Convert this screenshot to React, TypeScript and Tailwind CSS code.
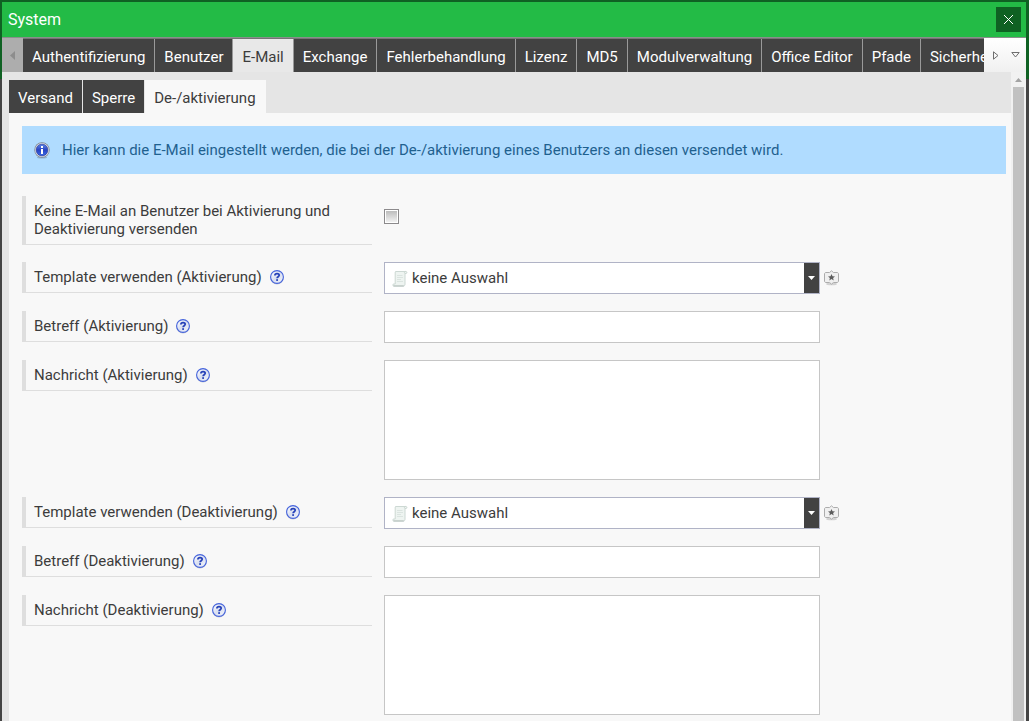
import * as React from 'react';
import { clsx } from 'clsx';

const mainTabs = [
  'Authentifizierung',
  'Benutzer',
  'E-Mail',
  'Exchange',
  'Fehlerbehandlung',
  'Lizenz',
  'MD5',
  'Modulverwaltung',
  'Office Editor',
  'Pfade',
  'Sicherheit',
];

const subTabs = ['Versand', 'Sperre', 'De-/aktivierung'];

type FieldKind = 'checkbox' | 'select' | 'text' | 'textarea';

interface Field {
  id: string;
  label: string;
  kind: FieldKind;
}

const fields: Field[] = [
  {
    id: 'no-mail',
    label: 'Keine E-Mail an Benutzer bei Aktivierung und Deaktivierung versenden',
    kind: 'checkbox',
  },
  { id: 'tpl-on', label: 'Template verwenden (Aktivierung)', kind: 'select' },
  { id: 'subject-on', label: 'Betreff (Aktivierung)', kind: 'text' },
  { id: 'message-on', label: 'Nachricht (Aktivierung)', kind: 'textarea' },
  { id: 'tpl-off', label: 'Template verwenden (Deaktivierung)', kind: 'select' },
  { id: 'subject-off', label: 'Betreff (Deaktivierung)', kind: 'text' },
  { id: 'message-off', label: 'Nachricht (Deaktivierung)', kind: 'textarea' },
];

function InfoIcon() {
  return (
    <svg width="16" height="17" viewBox="0 0 16 17" className="shrink-0" aria-hidden="true">
      <defs>
        <linearGradient id="info-fill" x1="0" y1="0" x2="0" y2="1">
          <stop offset="0" stopColor="#5f86e6" />
          <stop offset="0.5" stopColor="#2743c4" />
          <stop offset="1" stopColor="#3d6ae6" />
        </linearGradient>
      </defs>
      <ellipse cx="8" cy="15.6" rx="5" ry="1" fill="#8fb2d0" />
      <circle cx="8" cy="8" r="7.7" fill="#7d8592" />
      <circle cx="8" cy="8" r="7" fill="#dfe3ea" />
      <circle cx="8" cy="8" r="5.9" fill="url(#info-fill)" stroke="#26368f" strokeWidth="0.6" />
      <rect x="7" y="4" width="2" height="2" fill="#fff" />
      <rect x="7" y="7" width="2" height="5" fill="#fff" />
    </svg>
  );
}

function HelpIcon() {
  return (
    <svg width="14" height="15" viewBox="0 0 14 15" aria-hidden="true">
      <defs>
        <linearGradient id="help-fill" x1="0" y1="0" x2="1" y2="1">
          <stop offset="0" stopColor="#ffffff" />
          <stop offset="0.5" stopColor="#d9dff0" />
          <stop offset="1" stopColor="#f6f8fd" />
        </linearGradient>
      </defs>
      <circle cx="7" cy="7.8" r="6.6" fill="#c6c8d0" />
      <circle cx="7" cy="7" r="6.4" fill="url(#help-fill)" stroke="#4463dc" strokeWidth="1.1" />
      <path
        d="M4.9 5.4C4.9 3 9.2 3 9.2 5.3C9.2 6.700 7.100 6.700 7.100 8.300"
        fill="none"
        stroke="#2540b8"
        strokeWidth="1.7"
      />
      <rect x="6.2" y="9.200" width="1.800" height="1.700" fill="#2540b8" />
    </svg>
  );
}

function ScrollIcon() {
  return (
    <svg width="16" height="17" viewBox="0 0 16 17" aria-hidden="true">
      <path
        d="M3.5 1.5H14c1.2 0 1.2 2 0 2h-1v10.8c0 1-.6 1.7-1.4 1.7H1.8c-1.4 0-1.4-2 0-2h1.4V3c0-.8 0-1.2.3-1.5z"
        fill="#eef4f1"
        stroke="#ccd8d3"
      />
      <path d="M12.8 3.5c-.6-.6-.4-1.6.4-2" fill="none" stroke="#ccd8d3" />
      <path d="M1.5 16h10.3" stroke="#b4bfbb" />
      <path d="M5 5.5h5.5M5 7.5h6M5 9.5h4M5 11.5h6" stroke="#dbe4e0" />
    </svg>
  );
}

function StarBoxIcon() {
  return (
    <svg width="15" height="16" viewBox="0 0 15 16" aria-hidden="true">
      <ellipse cx="7.5" cy="14" rx="5.5" ry="1.3" fill="#d2d2d2" />
      <path
        d="M2 2.5h3.6L7.5.8l1.9 1.7H13c.9 0 1.5.6 1.5 1.5v7c0 .9-.6 1.5-1.5 1.5H9.400l-1.900 1.700-1.900-1.700H2c-.9 0-1.500-.6-1.500-1.500V4c0-.9.6-1.500 1.500-1.500z"
        fill="#f0f0f0"
        stroke="#acacac"
      />
      <path
        d="M7.5 3.900l1 2.300 2.500.2-1.900 1.600.6 2.400-2.200-1.300-2.200 1.300.6-2.400L4 6.400l2.500-.2z"
        fill="#5c5c5c"
      />
    </svg>
  );
}

function FieldControl({ id, kind }: { id: string; kind: FieldKind }) {
  const [checked, setChecked] = React.useState(false);

  if (kind === 'checkbox') {
    return (
      <div className="flex pt-[13px]">
        <input
          id={id}
          type="checkbox"
          checked={checked}
          onChange={(e) => setChecked(e.target.checked)}
          className="size-[15px] appearance-none border border-[#8c8a8c] bg-linear-to-b from-[#b8b8b8] to-[#f6f6f6] shadow-[inset_0_0_0_1px_#fff] checked:from-[#555] checked:to-[#888]"
        />
      </div>
    );
  }

  if (kind === 'select') {
    return (
      <div className="flex items-center gap-1">
        <div className="relative flex-1">
          <select
            id={id}
            className="block h-8 w-full appearance-none border border-[#b0b3c6] bg-white pr-5 pl-[27px] text-[15px] text-[#3c3c3c]"
          >
            <option>keine Auswahl</option>
          </select>
          <span className="pointer-events-none absolute top-2 left-2">
            <ScrollIcon />
          </span>
          <span className="pointer-events-none absolute top-px right-px bottom-px flex w-[15px] items-center justify-center bg-[#424242]">
            <svg width="7" height="4" viewBox="0 0 7 4" aria-hidden="true">
              <path d="M0 0h7L3.5 4z" fill="#fff" />
            </svg>
          </span>
        </div>
        <button type="button" aria-label="Template bearbeiten" className="-mr-[19px]">
          <StarBoxIcon />
        </button>
      </div>
    );
  }

  if (kind === 'text') {
    return <input id={id} type="text" className="block h-8 w-full border border-[#c6c6c6] bg-white px-2 text-[15px]" />;
  }

  return <textarea id={id} className="block h-[120px] w-full resize-none border border-[#c6c6c6] bg-white p-2 text-[15px]" />;
}

function FieldRow({ field }: { field: Field }) {
  return (
    <div className="flex items-start gap-3">
      <div className="flex w-[350px] shrink-0 items-center gap-2 border-b border-l-4 border-[#dedede] py-[6px] pl-2">
        <label htmlFor={field.id} className="leading-[18px]">
          {field.label}
        </label>
        {field.kind !== 'checkbox' && (
          <button type="button" aria-label="Hilfe">
            <HelpIcon />
          </button>
        )}
      </div>
      <div className="w-[436px]">
        <FieldControl id={field.id} kind={field.kind} />
      </div>
    </div>
  );
}

export default function App() {
  const [mainTab, setMainTab] = React.useState('E-Mail');
  const [subTab, setSubTab] = React.useState('De-/aktivierung');

  return (
    <div className="h-screen overflow-hidden bg-[linear-gradient(#0f6123_79px,#444_79px)] pt-[2px] pr-[3px] pl-[2px] font-['Roboto',sans-serif] text-[15px] text-[#3c3c3c]">
      <div className="flex h-full flex-col bg-[#e5e5e5]">
        <header className="flex h-9 shrink-0 items-center justify-between border-b border-[#8a8f8b] bg-[#23bb46] pr-[5px] pl-[6px]">
          <h1 className="text-[16px] text-white">System</h1>
          <button
            type="button"
            aria-label="Schließen"
            className="flex size-[25px] items-center justify-center bg-[#0f6123]"
          >
            <svg width="11" height="11" viewBox="0 0 11 11" aria-hidden="true">
              <path d="M1 1l9 9M10 1l-9 9" stroke="#fff" />
            </svg>
          </button>
        </header>

        <nav className="flex h-[34px] shrink-0">
          <button
            type="button"
            aria-label="Zurück blättern"
            className="flex w-[21px] shrink-0 items-center justify-center bg-[#adadad]"
          >
            <svg width="5" height="9" viewBox="0 0 5 9" aria-hidden="true">
              <path d="M5 0v9L0 4.5z" fill="#8d8d8d" />
            </svg>
          </button>
          <div className="flex min-w-0 flex-1 overflow-hidden border-t border-[#747474]">
            {mainTabs.map((tab) => (
              <button
                key={tab}
                type="button"
                onClick={() => setMainTab(tab)}
                className={clsx(
                  'shrink-0 border-r border-[#999] px-[9px] pt-1',
                  tab === mainTab ? 'bg-[#e8e8e8] text-[#3c3c3c]' : 'bg-[#424242] text-white'
                )}
              >
                {tab}
              </button>
            ))}
          </div>
          <div className="flex w-[42px] shrink-0 items-center justify-between bg-linear-to-b from-white to-[#f0f0f0] pr-[6px] pl-[9px]">
            <button type="button" aria-label="Weiter blättern">
              <svg width="6" height="9" viewBox="0 0 6 9" aria-hidden="true">
                <path d="M.5.8v7.4L5 4.5z" fill="none" stroke="#6e6e6e" />
              </svg>
            </button>
            <button type="button" aria-label="Alle Reiter">
              <svg width="9" height="6" viewBox="0 0 9 6" aria-hidden="true">
                <path d="M.8.5h7.4L4.5 5z" fill="none" stroke="#6e6e6e" />
              </svg>
            </button>
          </div>
        </nav>

        <div className="flex min-h-0 flex-1">
          <div className="flex min-w-0 flex-1 flex-col pt-2 pl-[7px]">
            <nav className="flex h-[33px] shrink-0">
              {subTabs.map((tab) => (
                <button
                  key={tab}
                  type="button"
                  onClick={() => setSubTab(tab)}
                  className={clsx(
                    'border-r px-[9px] pt-1',
                    tab === subTab
                      ? 'border-[#f8f8f8] bg-[#f8f8f8] text-[#3c3c3c]'
                      : 'border-[#e5e5e5] bg-[#424242] text-white'
                  )}
                >
                  {tab}
                </button>
              ))}
            </nav>

            <main className="min-h-0 flex-1 overflow-hidden bg-[#f8f8f8] pt-[13px] pr-[5px] pl-[13px]">
              <p className="flex min-h-12 items-center gap-3 bg-[#b0dcff] px-3 text-[#1f618f]">
                <InfoIcon />
                Hier kann die E-Mail eingestellt werden, die bei der De-/aktivierung eines Benutzers an diesen
                versendet wird.
              </p>
              <form className="mt-[22px] flex flex-col gap-[17px]">
                {fields.map((field) => (
                  <FieldRow key={field.id} field={field} />
                ))}
              </form>
            </main>
          </div>

          <div className="flex w-[15px] shrink-0 flex-col bg-[#f1f1f1] px-[2px]">
            <div className="flex h-[15px] shrink-0 items-center justify-center">
              <svg width="7" height="4" viewBox="0 0 7 4" aria-hidden="true">
                <path d="M0 4h7L3.5 0z" fill="#a3a3a3" />
              </svg>
            </div>
            <div className="flex-1 bg-[#c1c1c1]" />
          </div>
        </div>
      </div>
    </div>
  );
}
